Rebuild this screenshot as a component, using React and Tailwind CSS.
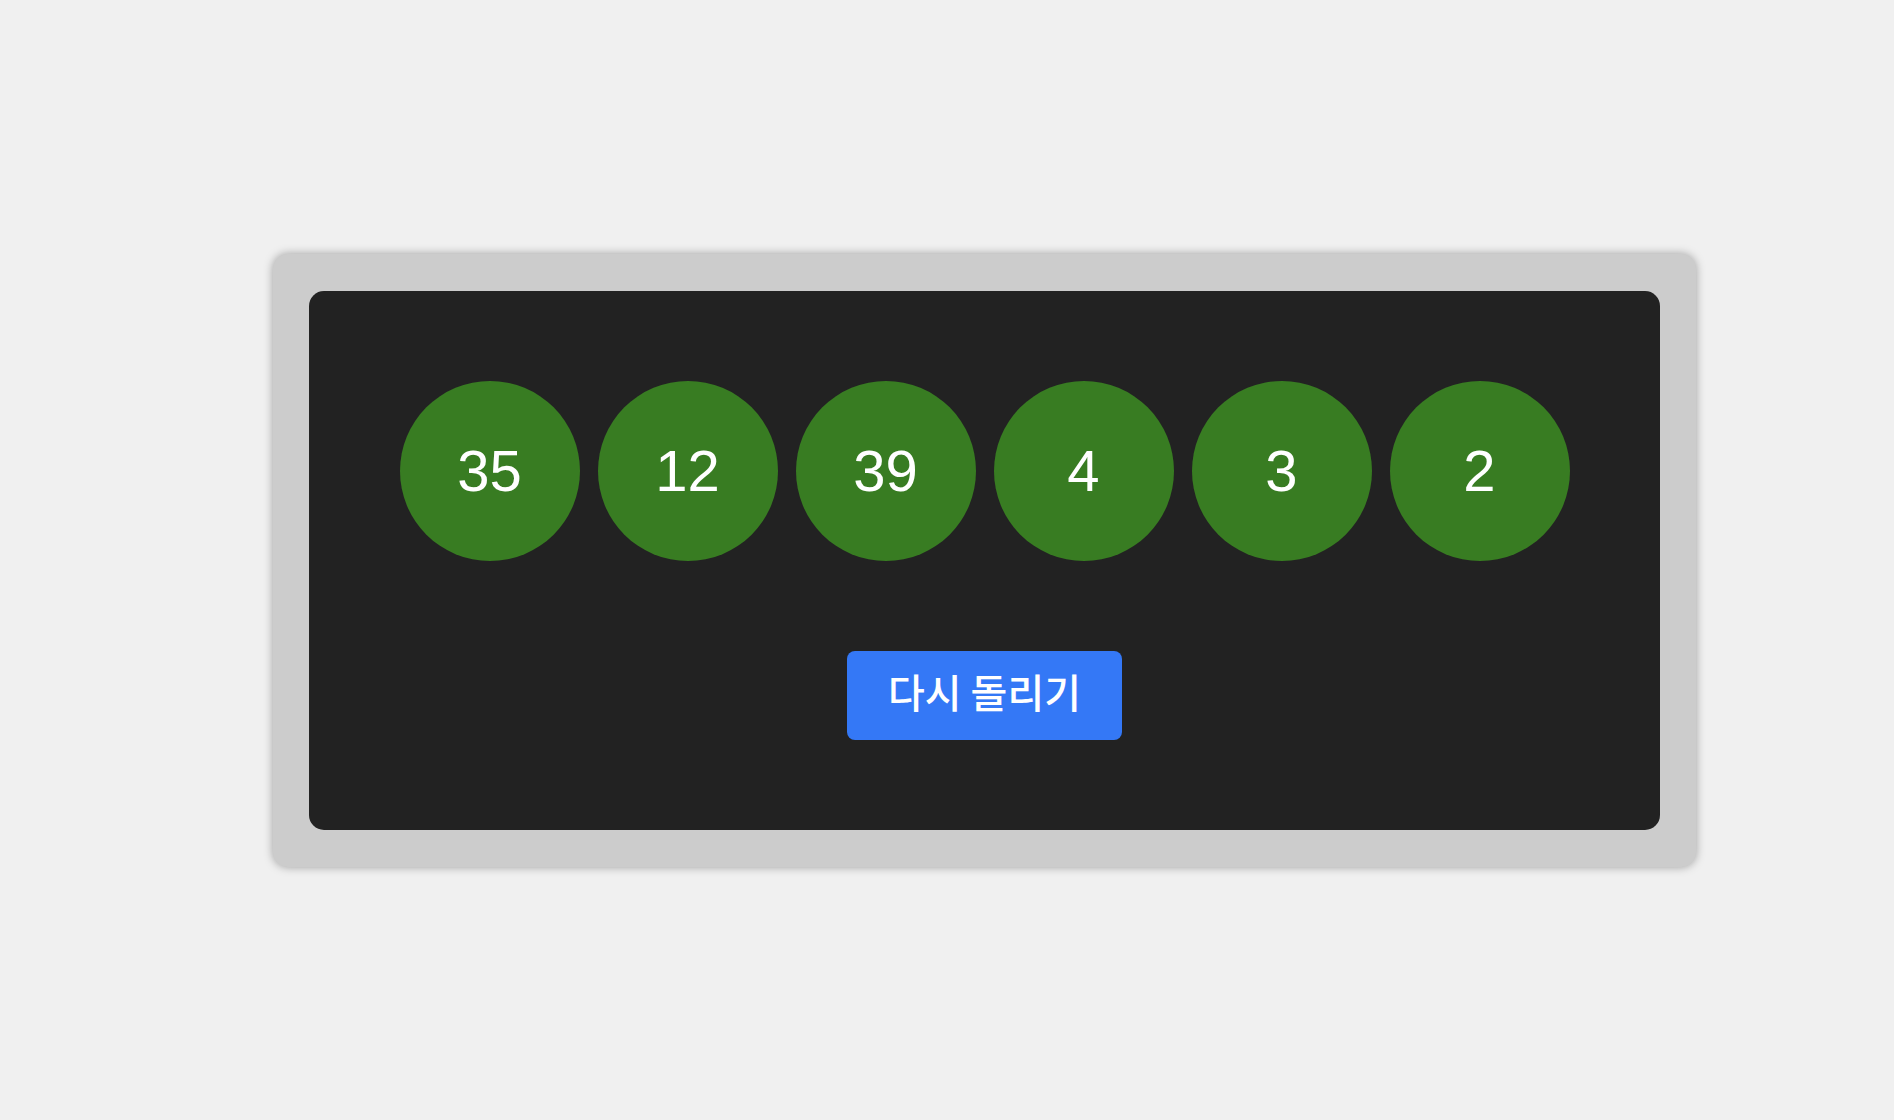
export default function App() {
  const numbers = [35, 12, 39, 4, 3, 2];

  return (
    <div
      className="flex min-h-screen w-full items-center bg-[#f0f0f0] pl-[273px]"
      style={{ fontFamily: '"Liberation Sans", "Noto Sans CJK KR", sans-serif' }}
    >
      {/* 바깥 카드 */}
      <div className="rounded-[15px] bg-[#cccccc] px-[36px] py-[37px] shadow-[0_0_10px_rgba(0,0,0,0.35)]">
        <div className="flex h-[539px] w-[1351px] flex-col items-center gap-[90px] rounded-[15px] bg-[#222222] pt-[90px]">
          <div className="flex gap-[18px]">
            {numbers.map((n, i) => (
              <div
                key={i}
                className="flex h-[180px] w-[180px] items-center justify-center rounded-full bg-[#387c22] text-[58px] text-white"
              >
                {n}
              </div>
            ))}
          </div>
          <button className="flex h-[89px] w-[275px] items-center justify-center rounded-[8px] bg-[#3478f6] pb-[8px] font-['Noto_Sans_CJK_KR',sans-serif] text-[40px] font-medium text-white">
            다시 돌리기
          </button>
        </div>
      </div>
    </div>
  );
}
